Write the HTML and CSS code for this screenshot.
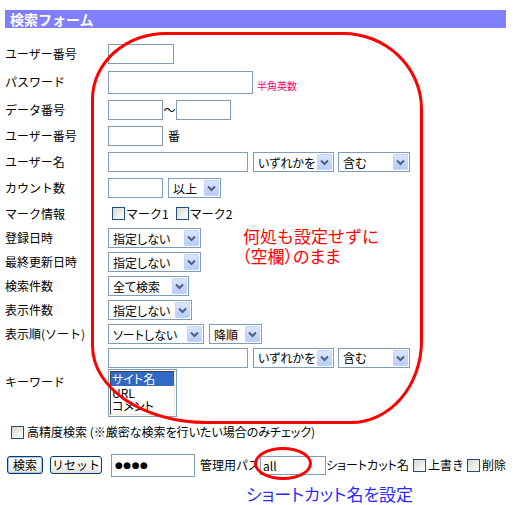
FILE: index.html
```html
<!DOCTYPE html>
<html lang="ja">
<head>
<meta charset="utf-8">
<title>検索フォーム</title>
<link rel="stylesheet" href="styles.css">
</head>
<body>
<div class="page">
  <h1 class="title">検索フォーム</h1>
  <form class="form">
    <div class="row">
      <span class="lbl">ユーザー番号</span>
      <div class="fld"><input class="tx id" type="text"></div>
    </div>
    <div class="row tall">
      <span class="lbl">パスワード</span>
      <div class="fld"><input class="tx pass" type="text"><span class="note">半角英数</span></div>
    </div>
    <div class="row">
      <span class="lbl">データ番号</span>
      <div class="fld"><input class="tx num" type="text"><span class="tilde">～</span><input class="tx num" type="text"></div>
    </div>
    <div class="row">
      <span class="lbl">ユーザー番号</span>
      <div class="fld"><input class="tx num" type="text"><span class="unit">番</span></div>
    </div>
    <div class="row">
      <span class="lbl">ユーザー名</span>
      <div class="fld">
        <input class="tx wide" type="text">
        <span class="sel any"><select><option>いずれかを</option><option>すべてを</option></select><i class="arr"><svg viewBox="0 0 15 16" width="15" height="16"><path d="M4 6.5 L7.5 10 L11 6.5" fill="none" stroke="#4d6185" stroke-width="2"/></svg></i></span>
        <span class="sel inc"><select><option>含む</option><option>含まない</option></select><i class="arr"><svg viewBox="0 0 15 16" width="15" height="16"><path d="M4 6.5 L7.5 10 L11 6.5" fill="none" stroke="#4d6185" stroke-width="2"/></svg></i></span>
      </div>
    </div>
    <div class="row">
      <span class="lbl">カウント数</span>
      <div class="fld">
        <input class="tx num" type="text">
        <span class="sel short"><select><option>以上</option><option>以下</option></select><i class="arr"><svg viewBox="0 0 15 16" width="15" height="16"><path d="M4 6.5 L7.5 10 L11 6.5" fill="none" stroke="#4d6185" stroke-width="2"/></svg></i></span>
      </div>
    </div>
    <div class="row mark">
      <span class="lbl">マーク情報</span>
      <div class="fld marks">
        <label class="chk first"><input class="cb" type="checkbox"><span>マーク1</span></label>
        <label class="chk"><input class="cb" type="checkbox"><span>マーク2</span></label>
      </div>
    </div>
    <div class="row srow">
      <span class="lbl">登録日時</span>
      <div class="fld"><span class="sel date"><select><option>指定しない</option></select><i class="arr"><svg viewBox="0 0 15 16" width="15" height="16"><path d="M4 6.5 L7.5 10 L11 6.5" fill="none" stroke="#4d6185" stroke-width="2"/></svg></i></span></div>
    </div>
    <div class="row srow">
      <span class="lbl">最終更新日時</span>
      <div class="fld"><span class="sel date"><select><option>指定しない</option></select><i class="arr"><svg viewBox="0 0 15 16" width="15" height="16"><path d="M4 6.5 L7.5 10 L11 6.5" fill="none" stroke="#4d6185" stroke-width="2"/></svg></i></span></div>
    </div>
    <div class="row srow">
      <span class="lbl">検索件数</span>
      <div class="fld"><span class="sel all"><select><option>全て検索</option></select><i class="arr"><svg viewBox="0 0 15 16" width="15" height="16"><path d="M4 6.5 L7.5 10 L11 6.5" fill="none" stroke="#4d6185" stroke-width="2"/></svg></i></span></div>
    </div>
    <div class="row srow">
      <span class="lbl">表示件数</span>
      <div class="fld"><span class="sel count"><select><option>指定しない</option></select><i class="arr"><svg viewBox="0 0 15 16" width="15" height="16"><path d="M4 6.5 L7.5 10 L11 6.5" fill="none" stroke="#4d6185" stroke-width="2"/></svg></i></span></div>
    </div>
    <div class="row srow">
      <span class="lbl">表示順(ソート)</span>
      <div class="fld">
        <span class="sel sort"><select><option>ソートしない</option></select><i class="arr"><svg viewBox="0 0 15 16" width="15" height="16"><path d="M4 6.5 L7.5 10 L11 6.5" fill="none" stroke="#4d6185" stroke-width="2"/></svg></i></span>
        <span class="sel short"><select><option>降順</option><option>昇順</option></select><i class="arr"><svg viewBox="0 0 15 16" width="15" height="16"><path d="M4 6.5 L7.5 10 L11 6.5" fill="none" stroke="#4d6185" stroke-width="2"/></svg></i></span>
      </div>
    </div>
    <div class="row kw">
      <span class="lbl">キーワード</span>
      <div class="kwbox">
        <div class="fld kwline">
          <input class="tx wide" type="text">
          <span class="sel any"><select><option>いずれかを</option><option>すべてを</option></select><i class="arr"><svg viewBox="0 0 15 16" width="15" height="16"><path d="M4 6.5 L7.5 10 L11 6.5" fill="none" stroke="#4d6185" stroke-width="2"/></svg></i></span>
          <span class="sel inc"><select><option>含む</option><option>含まない</option></select><i class="arr"><svg viewBox="0 0 15 16" width="15" height="16"><path d="M4 6.5 L7.5 10 L11 6.5" fill="none" stroke="#4d6185" stroke-width="2"/></svg></i></span>
        </div>
        <div class="listbox" role="listbox">
          <div class="lb-in">
            <div class="opt on">サイト名</div>
            <div class="opt">URL</div>
            <div class="opt">コメント</div>
          </div>
        </div>
      </div>
    </div>
    <div class="row hi">
      <label class="chk"><input class="cb" type="checkbox"><span>高精度検索 (※厳密な検索を行いたい場合のみチェック)</span></label>
    </div>
    <div class="row act">
      <button type="button" class="btn def">検索</button>
      <button type="button" class="btn reset">リセット</button>
      <input class="tx pw" type="text" value="●●●●">
      <span class="adm">管理用パス</span>
      <input class="tx scut" type="text" value="all">
      <span class="scname">ショートカット名</span>
      <label class="chk over"><input class="cb" type="checkbox"><span>上書き</span></label>
      <label class="chk del"><input class="cb" type="checkbox"><span>削除</span></label>
    </div>
  </form>

  <div class="ring"></div>
  <p class="memo">何処も設定せずに<br><span class="memo2">（空欄）のまま</span></p>
  <div class="oval"></div>
  <p class="hint">ショートカット名を設定</p>
</div>
</body>
</html>
```

FILE: styles.css
```css
* { box-sizing: border-box; }
html, body { margin: 0; padding: 0; background: #fff; }
body {
  font-family: "Noto Sans CJK JP", "Noto Sans", sans-serif;
  font-size: 12px;
  color: #000;
}
.page {
  position: relative;
  width: 528px;
  height: 505px;
  padding: 10px 0 0 5px;
}
.title {
  margin: 0;
  width: 501px;
  height: 18px;
  background: #8080ff;
  color: #fff;
  font-size: 14px;
  font-weight: bold;
  line-height: 18px;
  padding-left: 5px;
}
.form { margin: 13px 0 0 0; }
.row { display: flex; align-items: center; height: 26px; }
.row.tall { height: 30px; }
.row.mark { height: 25px; }
.row.srow { height: 24px; }
.row.kw { height: 71px; }
.row.hi { height: 30px; }
.row.act { height: 36px; }
.lbl { width: 103px; flex: none; line-height: 16px; white-space: nowrap; }
.fld { display: flex; align-items: center; gap: 5px; }

.tx {
  margin: 0;
  height: 20px;
  border: 1px solid #7f9db9;
  background: #fff;
  padding: 0 3px;
  font: inherit;
  color: #000;
  outline: none;
}
.tx.id { width: 66px; }
.tx.pass { width: 145px; height: 23px; }
.tx.num { width: 55px; }
.tx.wide { width: 140px; }
.fld .tilde { width: 13px; margin: 0 -5px; text-align: center; line-height: 16px; }
.unit { line-height: 16px; }
.note {
  font-size: 10px;
  color: #ff0066;
  line-height: 12px;
  margin: 8px 0 0 -1px;
}

.sel { position: relative; display: inline-block; height: 20px; flex: none; }
.sel select {
  appearance: none;
  -webkit-appearance: none;
  width: 100%;
  height: 20px;
  margin: 0;
  border: 1px solid #7f9db9;
  border-radius: 0;
  background: #fff;
  padding: 0 18px 0 4px;
  font: inherit;
  font-feature-settings: "palt";
  color: #000;
  outline: none;
}
.arr {
  position: absolute;
  right: 2px;
  top: 2px;
  width: 15px;
  height: 16px;
  border: 1px solid #c3d3fa;
  border-radius: 1px;
  background: linear-gradient(#dbe6fe, #b6cbf9);
  pointer-events: none;
  display: block;
}
.arr svg { position: absolute; left: -1px; top: -1px; display: block; }
.sel.any { width: 81px; }
.sel.inc { width: 72px; margin-left: -1px; }
.sel.short { width: 53px; }
.sel.date { width: 93px; }
.sel.all { width: 81px; }
.sel.count { width: 84px; }
.sel.sort { width: 96px; }

.chk { display: flex; align-items: center; line-height: 16px; white-space: nowrap; }
.cb {
  appearance: none;
  -webkit-appearance: none;
  width: 13px;
  height: 13px;
  margin: 0 1px 0 0;
  border: 1px solid #1c5180;
  background: linear-gradient(135deg, #d6d5ce 0%, #f4f4f0 70%, #fff 100%);
  flex: none;
}
.marks { gap: 0; }
.marks .chk.first { margin: 0 7px 0 4px; }

.kwbox { display: flex; flex-direction: column; }
.kwline { height: 23px; }
.listbox {
  width: 69px;
  height: 48px;
  border: 1px solid #7f9db9;
  padding: 1px;
  background: #fff;
}
.lb-in {
  height: 100%;
  border: 1px solid;
  border-color: #404040 #ece9d8 #ece9d8 #404040;
  font-feature-settings: "palt";
  overflow: hidden;
}
.opt { height: 13.5px; line-height: 13px; padding-left: 1px; white-space: nowrap; }
.opt.on { background: #316ac5; color: #fff; }

.row.hi .chk { margin-left: 6px; font-feature-settings: "palt"; }
.row.hi .cb { margin-right: 3px; }

.btn {
  margin: 0;
  height: 18px;
  padding: 0;
  border: 1px solid #003c74;
  border-radius: 3px;
  background: linear-gradient(#ffffff 0%, #f5f4ef 60%, #e3e0d4 100%);
  font: inherit;
  line-height: 14px;
  color: #000;
}
.btn.def { width: 36px; margin-left: 2px; box-shadow: inset 0 0 0 1px #a7c3f0; }
.btn.reset { width: 52px; margin-left: 7px; }
.tx.pw {
  width: 84px;
  height: 23px;
  margin-left: 9px;
  font-family: "DejaVu Sans", sans-serif;
  font-size: 9px;
  letter-spacing: 0.5px;
}
.adm { margin-left: 5px; line-height: 16px; white-space: nowrap; }
.tx.scut { width: 66px; height: 19px; padding-left: 2px; }
.scname { line-height: 16px; white-space: nowrap; font-feature-settings: "palt"; }
.chk.over { margin-left: 4px; }
.chk.over .cb, .chk.del .cb { margin-right: 2px; }
.chk.del { margin-left: 3px; }

.ring {
  position: absolute;
  left: 91px;
  top: 32px;
  width: 332px;
  height: 392px;
  border: 3px solid #ff0000;
  border-radius: 75px 80px 72px 115px / 67px 77px 83px 78px;
  pointer-events: none;
}
.memo {
  position: absolute;
  left: 243px;
  top: 226px;
  margin: 0;
  font-size: 17px;
  line-height: 20px;
  color: #ff0000;
  white-space: nowrap;
}
.memo2 { font-feature-settings: "palt"; margin-left: -1px; }
.oval {
  position: absolute;
  left: 254px;
  top: 447px;
  width: 58px;
  height: 33px;
  border: 3px solid #ff0000;
  border-radius: 50%;
  pointer-events: none;
}
.hint {
  position: absolute;
  left: 246px;
  top: 485px;
  margin: 0;
  font-size: 17px;
  line-height: 18px;
  color: #2b2bff;
  white-space: nowrap;
  font-feature-settings: "palt";
}
```
